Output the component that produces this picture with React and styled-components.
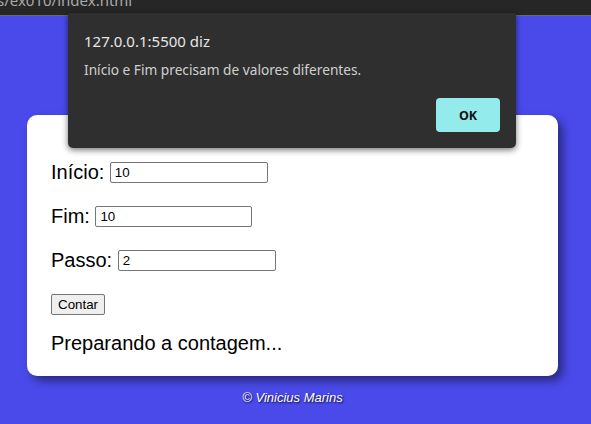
import React from "react";
import styled, { createGlobalStyle } from "styled-components";

const Global = createGlobalStyle`
  html, body { margin: 0; padding: 0; }
  body { width: 591px; height: 424px; overflow: hidden; background: #4a4aeb; }
`;

const Screen = styled.div`
  position: relative;
  width: 591px;
  height: 424px;
  display: flex;
  flex-direction: column;
  overflow: hidden;
`;

const BrowserBar = styled.div`
  height: 15px;
  background: #262626;
  border-bottom: 1px solid #6a6a6a;
  overflow: hidden;
  flex: none;
`;

const UrlText = styled.div`
  margin-top: -7px;
  margin-left: -3px;
  font: 15px/15px "Noto Sans", "Open Sans", sans-serif;
  color: #a9a9a9;
  white-space: nowrap;
`;

const Page = styled.main`
  flex: 1;
  background: #4a4aeb;
  padding: 99px 0 0 27px;
`;

const Column = styled.div`
  width: 531px;
  display: flex;
  flex-direction: column;
`;

const Card = styled.section`
  background: #ffffff;
  border-radius: 10px;
  box-shadow: 5px 5px 10px rgba(0, 0, 0, 0.45);
  padding: 45px 24px 21px;
  display: flex;
  flex-direction: column;
  align-items: flex-start;
  font-family: "Liberation Sans", Arial, sans-serif;
  color: #000;
`;

const Field = styled.div`
  display: flex;
  align-items: center;
  height: 24px;
  margin-bottom: 20px;
  font-size: 20px;
`;

const Label = styled.label`
  margin-right: 5.5px;
`;

const TextInput = styled.input`
  box-sizing: border-box;
  width: ${(p) => p.$w}px;
  height: 21px;
  padding: 1px 4px;
  border: 1px solid #767676;
  border-radius: 2px;
  font: 13.33px "Liberation Sans", Arial, sans-serif;
  color: #000;
  background: #fff;
  outline: none;
`;

const Button = styled.button`
  margin-top: 2px;
  height: 21px;
  padding: 1px 6px;
  border: 1px solid #767676;
  border-radius: 2px;
  background: #efefef;
  font: 13.33px "Liberation Sans", Arial, sans-serif;
  color: #000;
`;

const Status = styled.p`
  margin: 17px 0 0;
  font-size: 20px;
  line-height: 23px;
`;

const Footer = styled.footer`
  margin-top: 14px;
  text-align: center;
  font: italic 13px/15px "Liberation Sans", Arial, sans-serif;
  color: #ffffff;
  text-shadow: 1px 1px 2px rgba(0, 0, 0, 0.85);
`;

const Dialog = styled.div`
  position: absolute;
  left: 68px;
  top: 13px;
  width: 448px;
  height: 135px;
  box-sizing: border-box;
  background: #2f2f2f;
  border-radius: 0 0 5px 5px;
  box-shadow: 0 2px 6px rgba(0, 0, 0, 0.55);
  padding: 18px 16px 16px;
  display: flex;
  flex-direction: column;
  font-family: "Noto Sans", "Open Sans", sans-serif;
`;

const DialogTitle = styled.div`
  font-size: 15px;
  line-height: 20px;
  color: #e6e6e6;
`;

const DialogMessage = styled.div`
  margin-top: 10px;
  font-size: 13.7px;
  line-height: 18px;
  color: #cfcfcf;
`;

const DialogActions = styled.div`
  margin-top: auto;
  display: flex;
  justify-content: flex-end;
`;

const OkButton = styled.button`
  width: 64px;
  height: 34px;
  border: none;
  border-radius: 4px;
  background: #94ebeb;
  color: #111;
  font: 700 12.5px "Noto Sans", "Open Sans", sans-serif;
`;

export default function App() {
  return (
    <>
      <Global />
      <Screen>
        <BrowserBar>
          <UrlText>s/ex010/index.html</UrlText>
        </BrowserBar>
        <Page>
          <Column>
            <Card>
              <Field>
                <Label>Início:</Label>
                <TextInput $w={158} defaultValue="10" />
              </Field>
              <Field>
                <Label>Fim:</Label>
                <TextInput $w={157} defaultValue="10" />
              </Field>
              <Field>
                <Label>Passo:</Label>
                <TextInput $w={158} defaultValue="2" />
              </Field>
              <Button>Contar</Button>
              <Status>Preparando a contagem...</Status>
            </Card>
            <Footer>© Vinicius Marins</Footer>
          </Column>
        </Page>
        <Dialog>
          <DialogTitle>127.0.0.1:5500 diz</DialogTitle>
          <DialogMessage>Início e Fim precisam de valores diferentes.</DialogMessage>
          <DialogActions>
            <OkButton>OK</OkButton>
          </DialogActions>
        </Dialog>
      </Screen>
    </>
  );
}
